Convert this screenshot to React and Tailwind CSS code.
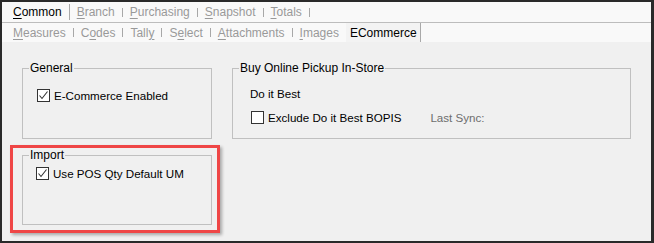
import React from 'react'

const font = { fontFamily: '"Liberation Sans", Arial, sans-serif' }

function Tab({ label, mnemonic, active, last }) {
  const i = label.indexOf(mnemonic)
  return (
    <>
      <span className={`px-[7px] ${active ? 'text-black' : 'text-[#999]'}`}>
        {mnemonic ? (
          <>
            {label.slice(0, i)}
            <span className="underline underline-offset-2">{mnemonic}</span>
            {label.slice(i + 1)}
          </>
        ) : (
          label
        )}
      </span>
      {!last && (
        <span className={active ? 'w-px self-stretch my-[2px] bg-[#a9a9a9]' : 'w-px h-[9px] bg-[#a8a8a8]'} />
      )}
    </>
  )
}

function Checkbox({ checked }) {
  return (
    <span className="flex h-[13px] w-[13px] shrink-0 items-center justify-center border border-[#333] bg-white">
      {checked && (
        <svg width="11" height="11" viewBox="0 0 11 11">
          <polyline points="1.5,5.5 4,8.5 9.5,1.5" fill="none" stroke="#333" strokeWidth="1.1" />
        </svg>
      )}
    </span>
  )
}

function Group({ title, className, children }) {
  return (
    <fieldset className={`border border-[#c0c0c0] ${className}`}>
      <legend className="ml-[6px] px-[1px] text-[12px] leading-[14px] text-black">{title}</legend>
      {children}
    </fieldset>
  )
}

export default function App() {
  return (
    <div
      className="flex h-[243px] w-[654px] flex-col border-2 border-r-[3px] border-[#2a2a2a] bg-[#f0f0f0] text-[12px]"
      style={font}
    >
      <div className="flex h-[21px] items-center border-b border-[#bdbdbd] bg-[#f9f9f9] pl-[4px]">
        <Tab label="Common" mnemonic="C" active />
        <Tab label="Branch" mnemonic="B" />
        <Tab label="Purchasing" mnemonic="P" />
        <Tab label="Snapshot" mnemonic="S" />
        <Tab label="Totals" mnemonic="T" />
      </div>
      <div className="flex h-[19px] items-center bg-[#f9f9f9] pl-[4px]">
        <Tab label="Measures" mnemonic="M" />
        <Tab label="Codes" mnemonic="o" />
        <Tab label="Tally" mnemonic="y" />
        <Tab label="Select" mnemonic="e" />
        <Tab label="Attachments" mnemonic="A" />
        <Tab label="Images" mnemonic="I" last />
        <span className="flex h-full items-center border-r border-[#a9a9a9] bg-[#f3f3f3] pl-[4px] pr-[3px] text-black">
          ECommerce
        </span>
      </div>

      <div className="flex flex-col pl-[20px] pt-[19px] text-[11.6px]">
        <div className="flex gap-[20px]">
          <Group title="General" className="h-[78px] w-[190px]">
            <div className="flex items-center gap-[4px] pl-[14px] pt-[12px]">
              <Checkbox checked />
              <span className="text-black">E-Commerce Enabled</span>
            </div>
          </Group>
          <Group title="Buy Online Pickup In-Store" className="h-[78px] w-[399px]">
            <div className="pl-[17px] pt-[12px] leading-[14px] text-black">Do it Best</div>
            <div className="mt-[8px] flex items-center pl-[18px]">
              <Checkbox />
              <span className="ml-[4px] text-black">Exclude Do it Best BOPIS</span>
              <span className="ml-[29px] text-[#6d6d6d]">Last Sync:</span>
            </div>
          </Group>
        </div>

        <div className="relative mt-[9px] w-[190px]">
          <Group title="Import" className="h-[77px] w-[190px]">
            <div className="flex items-center gap-[4px] pl-[13px] pt-[3px]">
              <Checkbox checked />
              <span className="text-black">Use POS Qty Default UM</span>
            </div>
          </Group>
          <div className="pointer-events-none absolute -left-[12px] -top-[3px] h-[88px] w-[210px] border-[3px] border-[#ef4646] shadow-[2px_2px_3px_rgba(0,0,0,0.3)]" />
        </div>
      </div>
    </div>
  )
}
